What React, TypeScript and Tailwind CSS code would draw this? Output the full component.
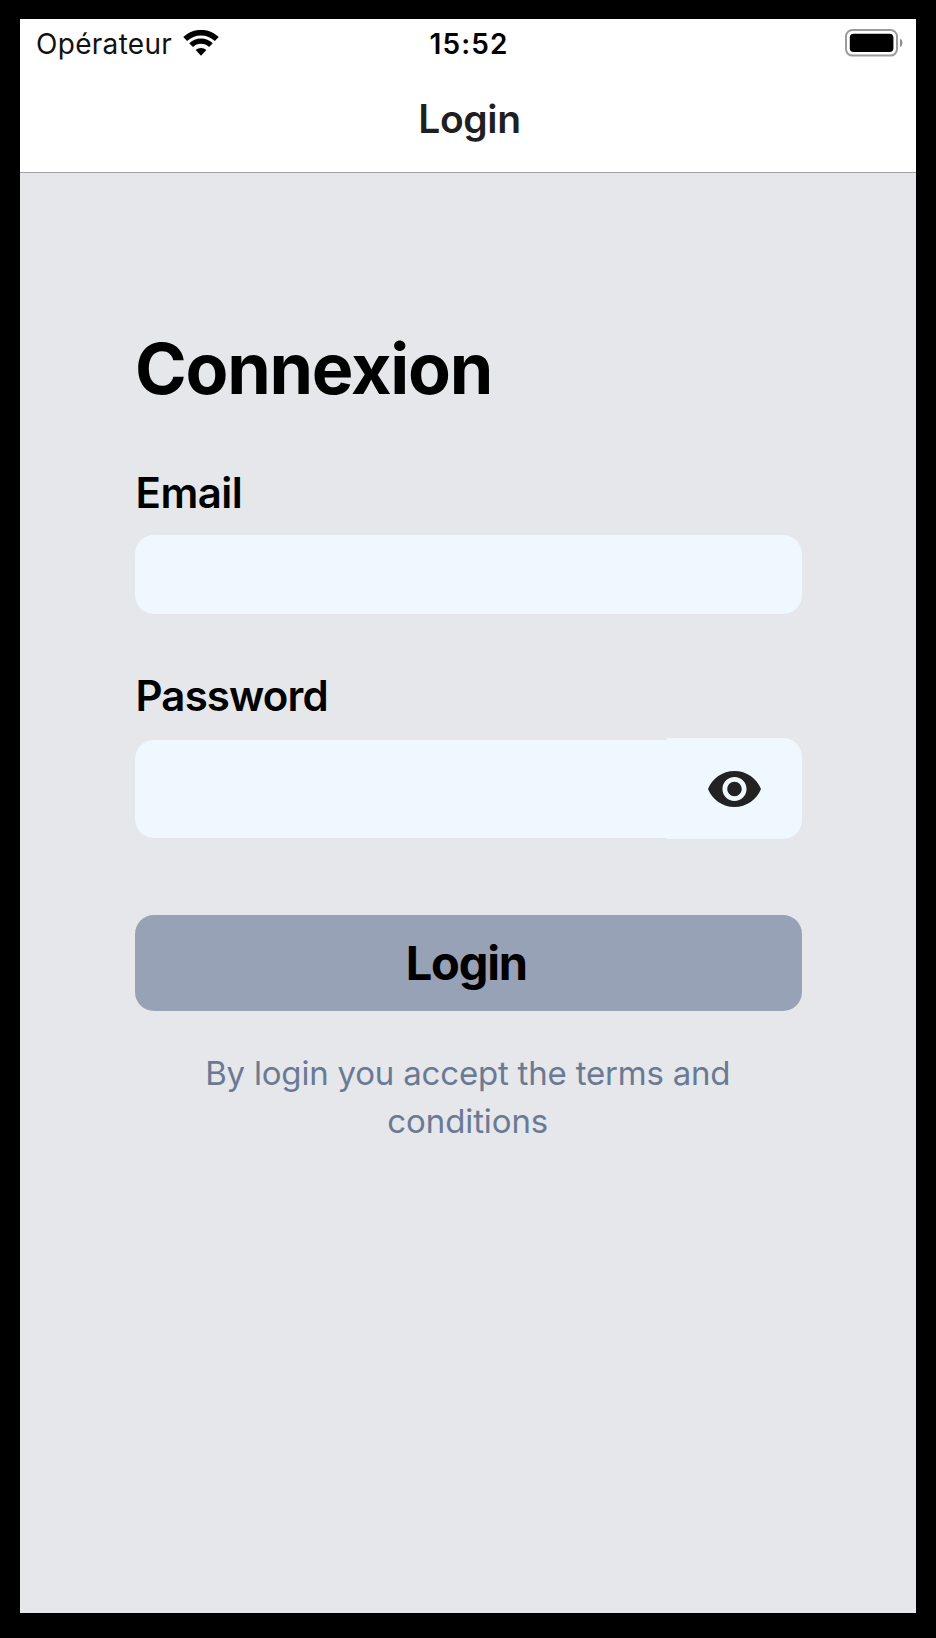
import React from "react";

function WifiIcon() {
  return (
    <svg className="h-[27px] w-9" viewBox="0 0 36 27" fill="none" stroke="#000">
      <path d="M2.2 9.1A22.6 22.6 0 0 1 33.8 9.1" strokeWidth="5.6" />
      <path d="M8.1 15.1A14.2 14.2 0 0 1 27.9 15.1" strokeWidth="5.4" />
      <path d="M12.6 20A8.2 8.2 0 0 1 23.4 20L18 25.8Z" fill="#000" stroke="none" />
    </svg>
  );
}

function BatteryIcon() {
  return (
    <svg className="h-7 w-[58px]" viewBox="0 0 58 28">
      <rect x="1" y="1" width="51" height="25.6" rx="6.5" fill="none" stroke="#9b9b9b" strokeWidth="2" />
      <rect x="4.8" y="4.8" width="43.6" height="18.2" rx="3.8" fill="#000" />
      <path d="M55 9.5C58.2 10.6 58.2 17 55 18.1Z" fill="#8e8e8e" />
    </svg>
  );
}

function EyeIcon() {
  return (
    <svg className="h-[36px] w-[53px]" viewBox="1 4.5 22 15" preserveAspectRatio="none" fill="#222">
      <path d="M12 4.5C7 4.5 2.73 7.61 1 12c1.73 4.39 6 7.5 11 7.5s9.27-3.11 11-7.5c-1.73-4.39-6-7.5-11-7.5zM12 17c-2.76 0-5-2.24-5-5s2.24-5 5-5 5 2.24 5 5-2.24 5-5 5zm0-8c-1.66 0-3 1.34-3 3s1.34 3 3 3 3-1.34 3-3-1.34-3-3-3z" />
    </svg>
  );
}

function StatusBar() {
  return (
    <div className="grid h-12 grid-cols-3 items-start pr-[13px] pl-4 text-[28px] leading-[50px] text-black">
      <div className="flex items-start gap-[11px]">
        <span className="tracking-[0.3px] text-[#111]">Opérateur</span>
        <span className="pt-[11px]">
          <WifiIcon />
        </span>
      </div>
      <div className="pr-px text-center font-semibold tracking-[1.1px]">15:52</div>
      <div className="flex justify-end pt-[10px]">
        <BatteryIcon />
      </div>
    </div>
  );
}

export default function App() {
  return (
    <div className="h-[1638px] w-[936px] bg-black pt-[19px] pr-5 pb-[25px] pl-5 font-['Inter',sans-serif]">
      <div className="flex h-full flex-col bg-[#e5e7eb]">
        <header className="h-[154px] border-b border-[#a0a2a4] bg-white">
          <StatusBar />
          <h1 className="pl-[3px] text-center text-[39px] leading-[103px] font-semibold tracking-[-0.4px] text-[#1f1f21]">Login</h1>
        </header>
        <main className="flex flex-col pt-[154px] pr-[114.5px] pl-[115px] text-black">
          <h2 className="text-[70px] leading-[84px] font-bold tracking-[-1.25px]">Connexion</h2>
          <label className="mt-[57px] pl-[0.5px] text-[42px] leading-[50px] font-semibold tracking-[-0.5px]">Email</label>
          <input className="mt-[17px] h-[79px] rounded-[19px] bg-[#f0f8ff] px-5 text-[32px] outline-none" />
          <label className="mt-[57px] pl-[0.5px] text-[42px] leading-[50px] font-semibold tracking-[-0.85px]">Password</label>
          <div className="mt-[17px] flex h-[101px] items-start">
            <input type="password" className="mt-[1.5px] h-[98px] w-[532px] rounded-l-[19px] bg-[#f0f8ff] px-5 text-[32px] outline-none" />
            <button className="flex h-full flex-1 items-center rounded-r-[19px] bg-[#f0f8ff] pl-[41px]">
              <EyeIcon />
            </button>
          </div>
          <button className="mt-[76px] h-24 rounded-[19px] bg-[#98a2b6] pr-[4px] text-[47px] leading-[96px] font-bold tracking-[-1.2px]">Login</button>
          <p className="mt-[38px] pr-px text-center text-[33px] leading-[48px] tracking-[-0.2px] text-[#6b7a93]">
            By login you accept the terms and
            <br />
            <span className="tracking-[-0.1px]">conditions</span>
          </p>
        </main>
      </div>
    </div>
  );
}
